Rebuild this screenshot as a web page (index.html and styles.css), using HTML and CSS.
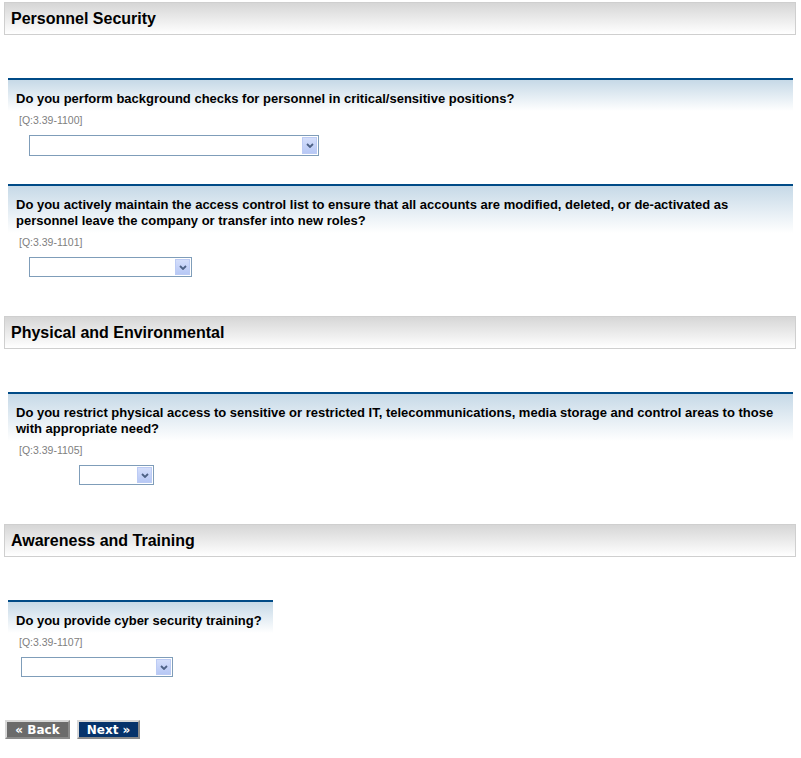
FILE: index.html
```html
<!DOCTYPE html>
<html lang="en">
<head>
    <meta charset="UTF-8">
    <title>Questionnaire</title>
    <link rel="stylesheet" href="styles.css">
</head>
<body>
    <div class="section-title">Personnel Security</div>

    <div class="question first">
        <div class="q-text">Do you perform background checks for personnel in critical/sensitive positions?</div>
        <div class="q-id">[Q:3.39-1100]</div>
        <div class="select select-1"><span class="arrow"><svg width="8" height="5" viewBox="0 0 8 5"><path d="M1 1 L4 4 L7 1" fill="none" stroke="#4d6185" stroke-width="1.8"/></svg></span></div>
    </div>

    <div class="question">
        <div class="q-text">Do you actively maintain the access control list to ensure that all accounts are modified, deleted, or de-activated as personnel leave the company or transfer into new roles?</div>
        <div class="q-id">[Q:3.39-1101]</div>
        <div class="select select-2"><span class="arrow"><svg width="8" height="5" viewBox="0 0 8 5"><path d="M1 1 L4 4 L7 1" fill="none" stroke="#4d6185" stroke-width="1.8"/></svg></span></div>
    </div>

    <div class="section-title">Physical and Environmental</div>

    <div class="question first">
        <div class="q-text">Do you restrict physical access to sensitive or restricted IT, telecommunications, media storage and control areas to those with appropriate need?</div>
        <div class="q-id">[Q:3.39-1105]</div>
        <div class="select select-3"><span class="arrow"><svg width="8" height="5" viewBox="0 0 8 5"><path d="M1 1 L4 4 L7 1" fill="none" stroke="#4d6185" stroke-width="1.8"/></svg></span></div>
    </div>

    <div class="section-title">Awareness and Training</div>

    <div class="question first narrow">
        <div class="q-text">Do you provide cyber security training?</div>
        <div class="q-id">[Q:3.39-1107]</div>
        <div class="select select-4"><span class="arrow"><svg width="8" height="5" viewBox="0 0 8 5"><path d="M1 1 L4 4 L7 1" fill="none" stroke="#4d6185" stroke-width="1.8"/></svg></span></div>
    </div>

    <div class="buttons">
        <button type="button" class="btn btn-back">&laquo; Back</button>
        <button type="button" class="btn btn-next">Next &raquo;</button>
    </div>
</body>
</html>
```

FILE: styles.css
```css
body {
    font-family: "Liberation Sans", Arial, sans-serif;
    background-color: #fff;
    color: #000;
    margin: 0;
    padding: 2px 5px 0 4px;
}
.section-title {
    height: 31px;
    line-height: 31px;
    padding-left: 6px;
    border: 1px solid #cfcfcf;
    background: linear-gradient(#d6d6d6, #fff);
    font-size: 16px;
    font-weight: bold;
    margin-top: 39px;
}
.section-title:first-child {
    margin-top: 0;
}
.question {
    margin: 28px 3px 0 4px;
}
.question.first {
    margin-top: 43px;
}
.question.narrow {
    width: 265px;
}
.q-text {
    border-top: 2px solid #004b87;
    background: linear-gradient(#c6d9e7, #fff);
    padding: 11px 8px 4px 8px;
    font-size: 13px;
    font-weight: bold;
    line-height: 16px;
}
.q-id {
    padding: 3px 0 0 11px;
    font-size: 10.5px;
    line-height: 13px;
    color: #808080;
}
.select {
    display: flex;
    justify-content: flex-end;
    height: 16px;
    margin-top: 8px;
    border: 1px solid #7f9db9;
    background: #fff;
    padding: 1px;
}
.select-1 { width: 286px; margin-left: 21px; height: 17px; }
.select-2 { width: 159px; margin-left: 21px; }
.select-3 { width: 71px; margin-left: 71px; }
.select-4 { width: 148px; margin-left: 13px; }
.arrow {
    width: 15px;
    display: flex;
    align-items: center;
    justify-content: center;
    box-sizing: border-box;
    border: 1px solid #bccbf4;
    background: linear-gradient(#d4defb, #b7c8f5);
}
.buttons {
    display: flex;
    gap: 7px;
    margin: 43px 0 0 1px;
}
.btn {
    height: 19px;
    padding: 0;
    font-family: "DejaVu Sans", Verdana, sans-serif;
    font-size: 12px;
    font-weight: bold;
    line-height: 14px;
    color: #fff;
    border: 2px solid;
    cursor: pointer;
}
.btn-back {
    width: 65px;
    background-color: #6b6b6b;
    border-color: #d8d8d8 #8a8a8a #8a8a8a #d8d8d8;
}
.btn-next {
    width: 63px;
    background-color: #06336b;
    border-color: #d8d8d8 #8a8a8a #8a8a8a #d8d8d8;
}
```
